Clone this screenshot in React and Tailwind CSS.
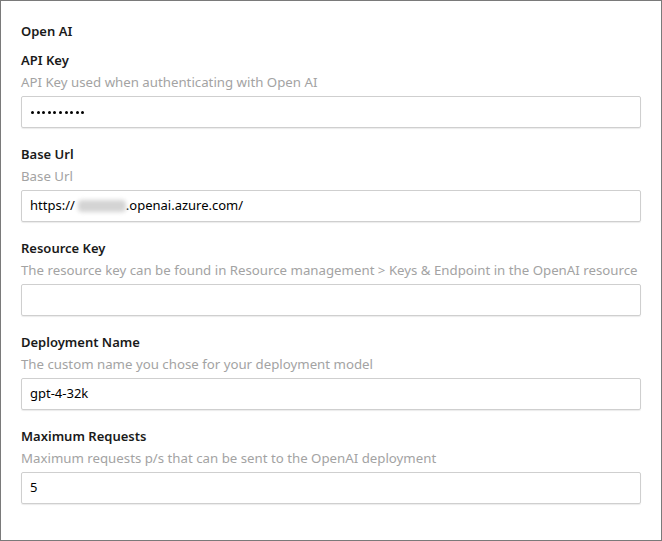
import React from 'react';

const fields = [
  { title: 'API Key', desc: 'API Key used when authenticating with Open AI', value: 'password' },
  { title: 'Base Url', desc: 'Base Url', value: 'url' },
  {
    title: 'Resource Key',
    desc: 'The resource key can be found in Resource management > Keys & Endpoint in the OpenAI resource',
    value: '',
  },
  { title: 'Deployment Name', desc: 'The custom name you chose for your deployment model', value: 'gpt-4-32k' },
  { title: 'Maximum Requests', desc: 'Maximum requests p/s that can be sent to the OpenAI deployment', value: '5' },
];

function Field({ title, desc, value }) {
  let content = <span>{value}</span>;
  if (value === 'url') {
    content = (
      <span className="flex items-center">
        https://
        <span className="inline-block ml-[3px] w-[48px] h-[12px] bg-[#d4d4d4] blur-[2px] rounded-sm" />
        .openai.azure.com/
      </span>
    );
  } else if (value === 'password') {
    content = (
      <span className="flex items-center gap-[2.6px] ml-[1px]">
        {Array.from({ length: 10 }).map((_, i) => (
          <span key={i} className="w-[3px] h-[3px] rounded-full bg-black" />
        ))}
      </span>
    );
  }

  return (
    <div className="flex flex-col mb-4">
      <div className="h-5 leading-5 text-[13px] font-semibold text-[#1a1a1a]">{title}</div>
      <div className="h-5 leading-5 mt-[2px] text-[13.25px] text-[#a3a3a3] whitespace-nowrap">{desc}</div>
      <div className="mt-1 h-8 border border-[#cfcfcf] rounded-[2px] shadow-[0_1px_1px_rgba(0,0,0,0.08)] flex items-center px-2 text-[13px] text-black">
        {content}
      </div>
    </div>
  );
}

export default function App() {
  return (
    <div className="w-[662px] h-[541px] bg-white border border-[#7a7a7a] font-['Noto_Sans','Open_Sans',sans-serif] overflow-hidden">
      <div className="pt-[20px] pl-[20px] pr-[20px]">
        <div className="h-5 leading-5 text-[13px] font-semibold text-[#1a1a1a] mb-[9px]">Open AI</div>
        {fields.map((f) => (
          <Field key={f.title} {...f} />
        ))}
      </div>
    </div>
  );
}
